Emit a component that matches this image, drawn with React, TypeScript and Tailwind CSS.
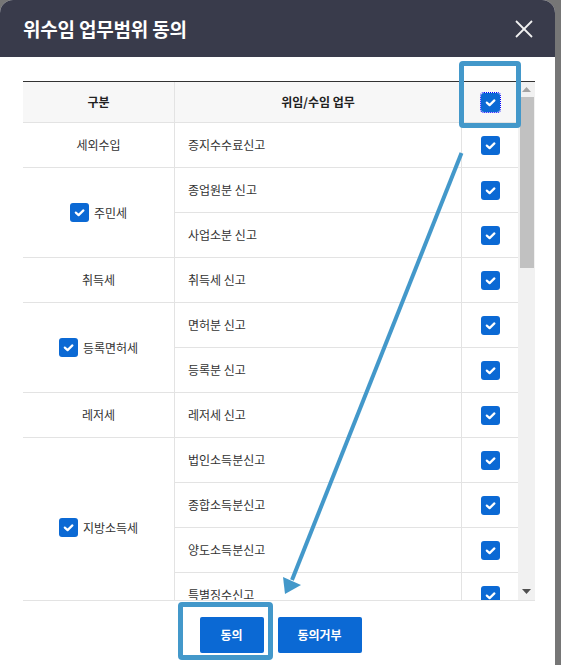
import React from "react";

const FONT = { fontFamily: '"Noto Sans CJK KR", "Noto Sans", sans-serif' };

function Check({ focus = false }: { focus?: boolean }) {
  return (
    <span
      className={
        "inline-flex w-[19px] h-[19px] rounded-[3px] bg-[#0b69d4] items-center justify-center shrink-0" +
        (focus ? " outline outline-1 outline-dotted outline-[#0000ff]" : "")
      }
    >
      <svg width="19" height="19" viewBox="0 0 19 19">
        <polyline points="5.8,9.6 8.6,12.1 13.4,7.4" fill="none" stroke="#fff" strokeWidth="2.2" strokeLinecap="round" strokeLinejoin="round" />
      </svg>
    </span>
  );
}

type Row = { group?: string; span?: number; checkGroup?: boolean; task: string };

const rows: Row[] = [
  { group: "세외수입", span: 1, task: "증지수수료신고" },
  { group: "주민세", span: 2, checkGroup: true, task: "종업원분 신고" },
  { task: "사업소분 신고" },
  { group: "취득세", span: 1, task: "취득세 신고" },
  { group: "등록면허세", span: 2, checkGroup: true, task: "면허분 신고" },
  { task: "등록분 신고" },
  { group: "레저세", span: 1, task: "레저세 신고" },
  { group: "지방소득세", span: 4, checkGroup: true, task: "법인소득분신고" },
  { task: "종합소득분신고" },
  { task: "양도소득분신고" },
  { task: "특별징수신고" },
];

const spanClass: Record<number, string> = {
  1: "row-span-1",
  2: "row-span-2",
  4: "row-span-4",
};

export default function App() {
  return (
    <div className="relative w-[561px] h-[665px] bg-[#767676] overflow-hidden" style={FONT}>
      <div className="w-[555px] h-[665px] bg-white rounded-t-[13px] overflow-hidden flex flex-col">
        {/* Header */}
        <div className="h-[57px] bg-[#393b4b] flex items-center justify-between pl-[23px] pr-[20px] shrink-0">
          <span className="text-white font-bold text-[19px] leading-none tracking-[-0.2px]">위수임 업무범위 동의</span>
          <svg width="24" height="24" viewBox="0 0 24 24" className="mr-[-1px]">
            <line x1="4" y1="4" x2="20" y2="20" stroke="#f2f2f2" strokeWidth="1.8" />
            <line x1="20" y1="4" x2="4" y2="20" stroke="#f2f2f2" strokeWidth="1.8" />
          </svg>
        </div>

        {/* Body */}
        <div className="pt-[24px] pl-[23px] pr-[20px]">
          <div className="border-t border-[#333] border-b border-b-[#e3e3e3] h-[520px] flex">
            <div className="w-[495px] overflow-hidden">
              <div className="grid grid-cols-[152px_287px_56px] grid-rows-[41px_repeat(11,45px)] text-[12px] text-[#333]">
                <div className="bg-[#f7f7f7] border-b border-r border-[#e3e3e3] flex items-center justify-center font-bold text-[#222]">구분</div>
                <div className="bg-[#f7f7f7] border-b border-r border-[#e3e3e3] flex items-center justify-center font-bold text-[#222]">위임/수임 업무</div>
                <div className="bg-[#f7f7f7] border-b border-[#e3e3e3] flex items-center justify-center">
                  <Check focus />
                </div>
                {rows.map((r, i) => (
                  <React.Fragment key={i}>
                    {r.group && (
                      <div
                        className={
                          "col-start-1 border-b border-r border-[#e3e3e3] flex items-center justify-center gap-[5px] " +
                          spanClass[r.span || 1]
                        }
                      >
                        {r.checkGroup && <Check />}
                        <span>{r.group}</span>
                      </div>
                    )}
                    <div className="col-start-2 border-b border-r border-[#e3e3e3] flex items-center pl-[13px]">{r.task}</div>
                    <div className="col-start-3 border-b border-[#e3e3e3] flex items-center justify-center">
                      <Check />
                    </div>
                  </React.Fragment>
                ))}
              </div>
            </div>
            {/* Scrollbar */}
            <div className="w-[17px] bg-[#f1f1f1] flex flex-col items-center">
              <div className="h-[15px] flex items-center justify-center">
                <svg width="9" height="5" viewBox="0 0 9 5">
                  <polygon points="0,5 9,5 4.5,0" fill="#a3a3a3" />
                </svg>
              </div>
              <div className="w-[14px] h-[171px] bg-[#c1c1c1]" />
              <div className="flex-1" />
              <div className="h-[17px] flex items-center justify-center">
                <svg width="9" height="5" viewBox="0 0 9 5">
                  <polygon points="0,0 9,0 4.5,5" fill="#505050" />
                </svg>
              </div>
            </div>
          </div>

          {/* Buttons */}
          <div className="flex justify-center gap-[14px] pt-[16px] pl-[3px]">
            <button className="w-[64px] h-[36px] bg-[#0b69d4] rounded-[2px] text-white text-[12px] font-bold">동의</button>
            <button className="w-[84px] h-[36px] bg-[#0b69d4] rounded-[2px] text-white text-[12px] font-bold">동의거부</button>
          </div>
        </div>
      </div>

      {/* Annotations */}
      <div className="absolute left-[459px] top-[61px] w-[62px] h-[67px] border-[5px] border-[#4398ca] rounded-[4px]" />
      <div className="absolute left-[178px] top-[602px] w-[95px] h-[58px] border-[5px] border-[#4398ca] rounded-[4px]" />
      <svg className="absolute left-0 top-0 pointer-events-none" width="561" height="665" viewBox="0 0 561 665">
        <line x1="461.5" y1="153" x2="292" y2="580" stroke="#4398ca" strokeWidth="4" />
        <polygon points="283,577 301,585 285,594" fill="#4398ca" />
      </svg>
    </div>
  );
}
